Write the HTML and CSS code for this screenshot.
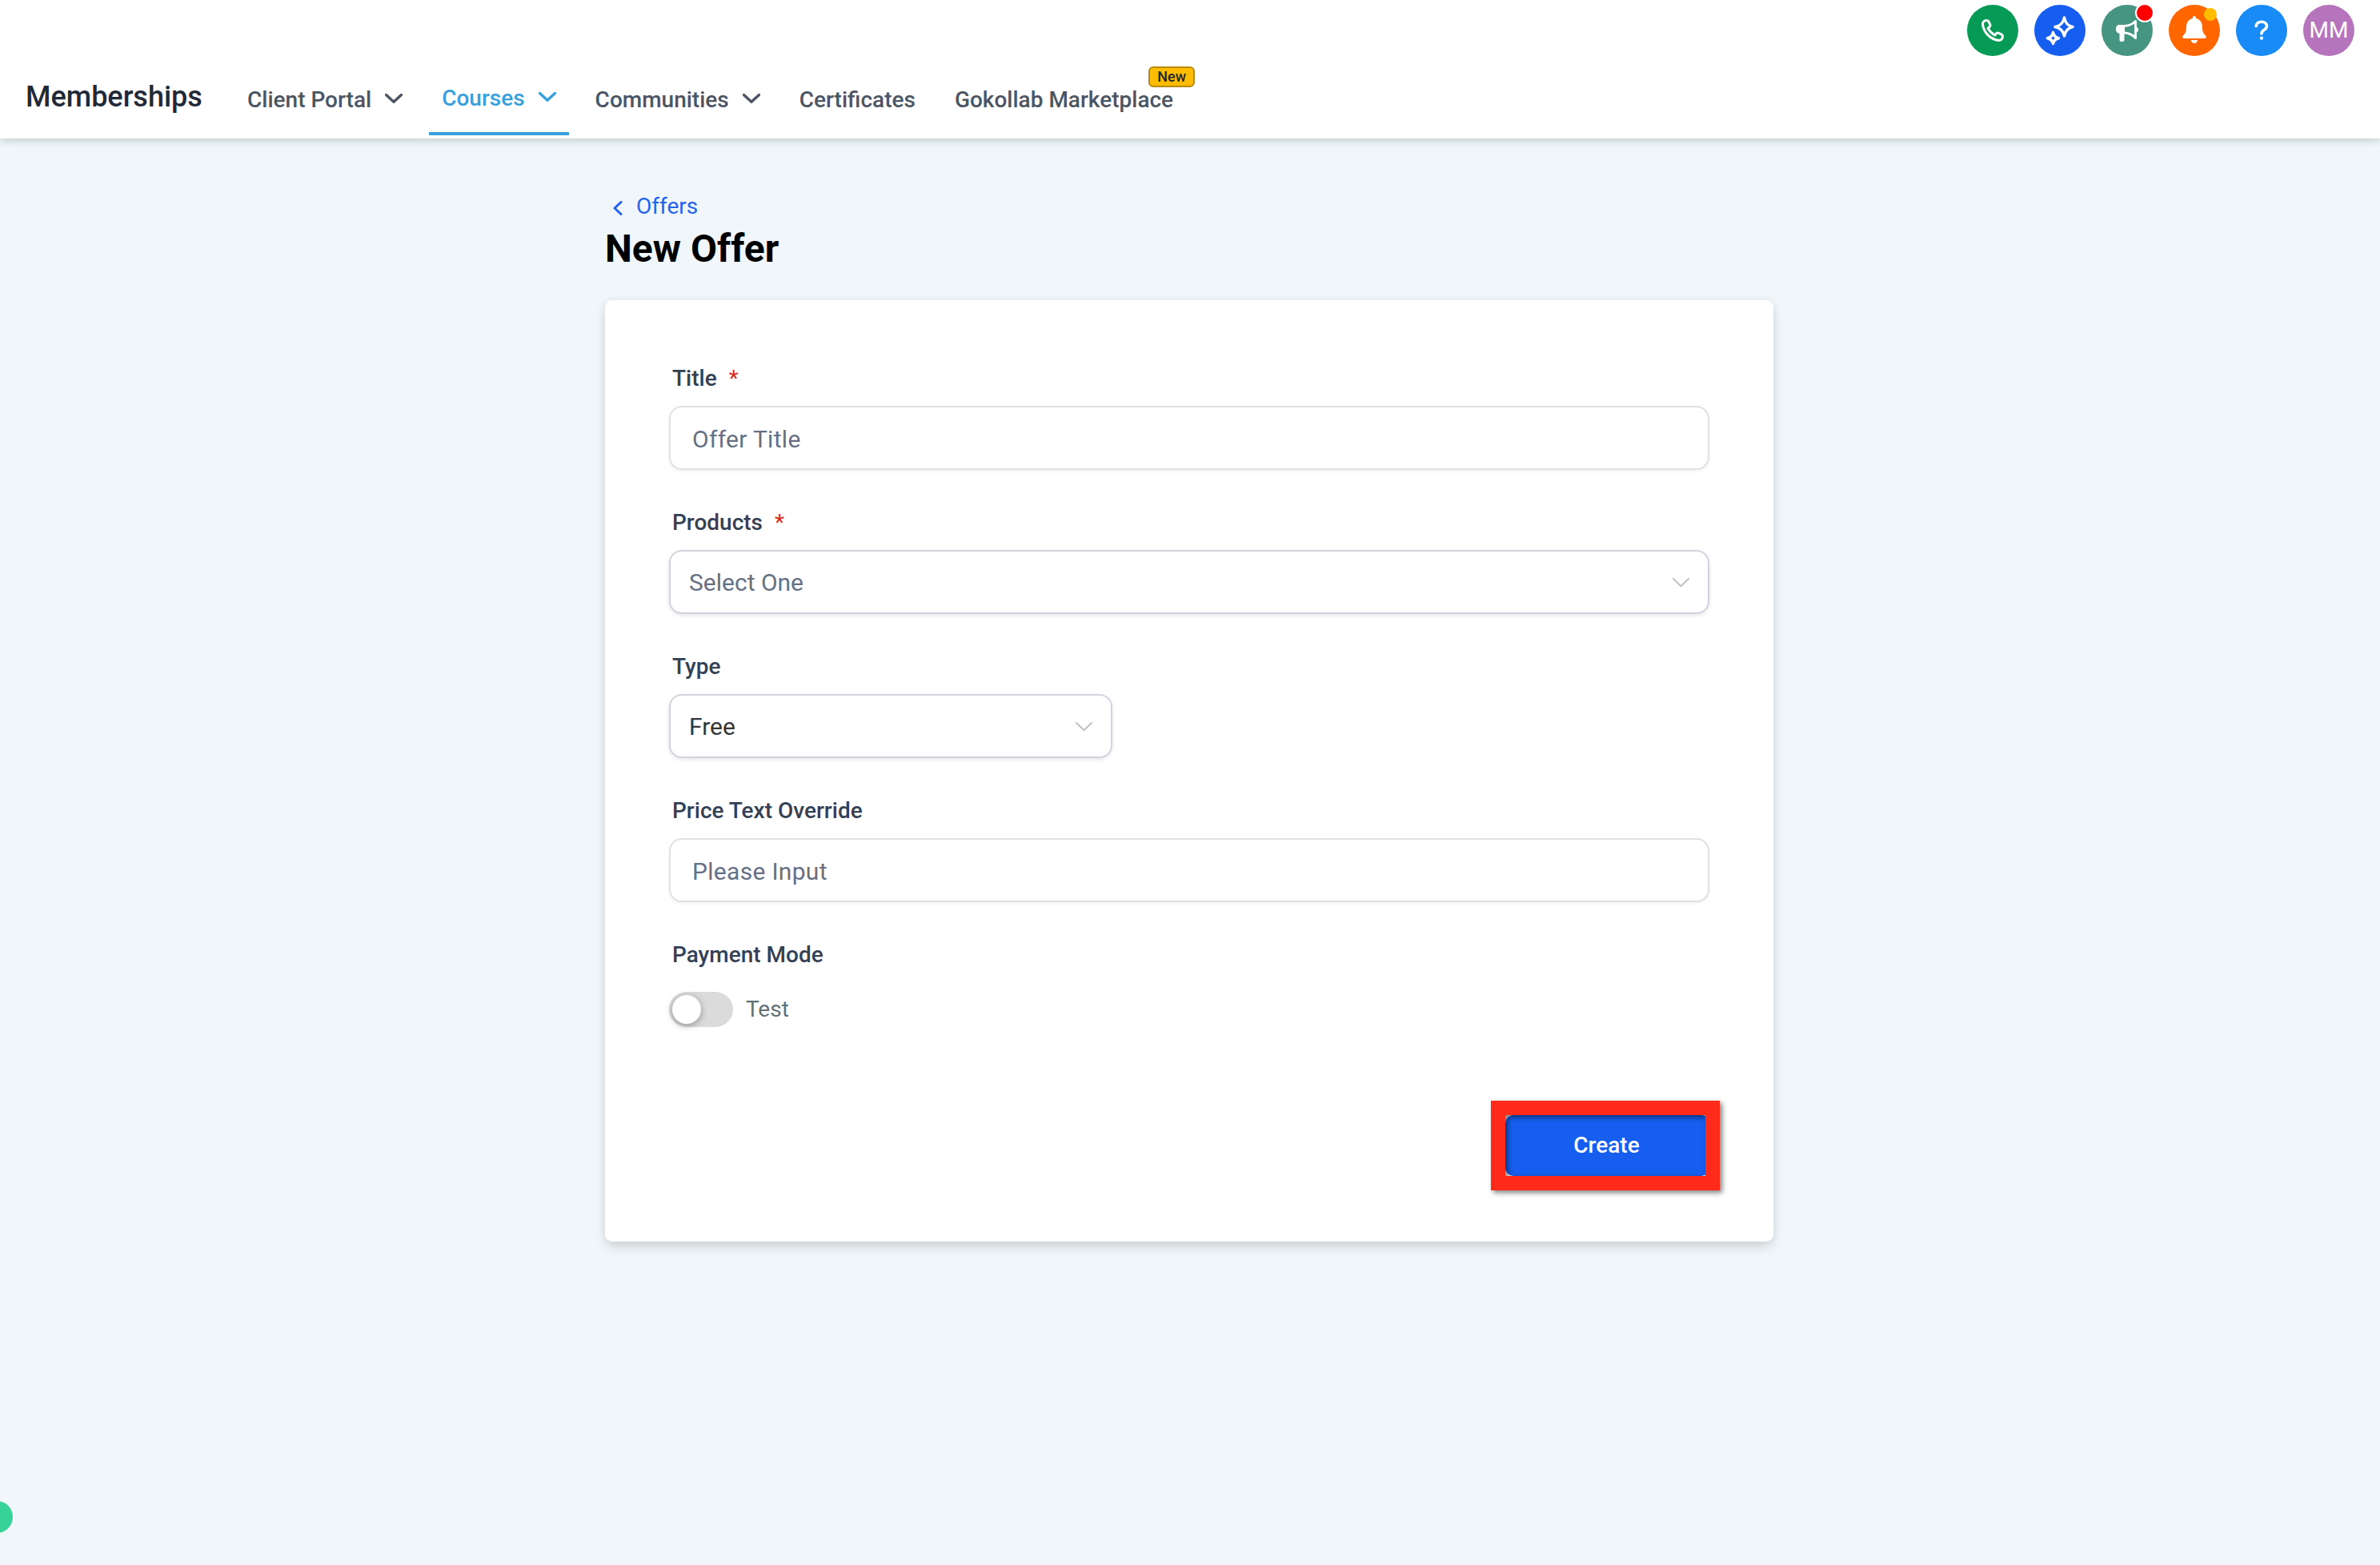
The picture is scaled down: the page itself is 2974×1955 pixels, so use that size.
FILE: index.html
```
<!DOCTYPE html>
<html lang="en">
<head>
    <meta charset="UTF-8">
    <meta name="viewport" content="width=device-width, initial-scale=1.0">
    <title>New Offer</title>
    <link rel="stylesheet" href="styles.css">
</head>
<body>
    <header class="header">
        <div class="topbar">
            <a class="circle phone">
                <svg width="28" height="28" viewBox="0 0 28 28"><path d="M6.500 1.600 C3.500 1.200 1.400 3.500 1.500 6.500 C3 17 11 25 21.500 26.500 C24.500 26.500 26.600 24.500 26.400 21.500 C26.400 20.300 25.800 19.400 24.800 18.900 L21.300 17.300 C20.100 16.800 19 17.200 18.200 18.200 L16.700 20 C13.200 18 10 14.800 8 11.300 L9.800 9.800 C10.800 9 11.200 7.900 10.700 6.700 L9.100 3.200 C8.600 2.200 7.700 1.600 6.500 1.600Z"/></svg>
            </a>
            <a class="circle spark">
                <svg width="38" height="38" viewBox="0 0 38 38"><path d="M24.500 3 Q26.500 13 35 14.500 Q26.500 16.500 24.500 26 Q22.500 16.500 13 14.500 Q22.500 13 24.500 3Z"/><path d="M10.500 21.500 Q11.500 27.500 17.500 28.700 Q11.500 30 10.500 35.500 Q9.500 30 3.300 28.700 Q9.500 27.500 10.500 21.500Z"/></svg>
            </a>
            <a class="circle horn">
                <svg width="28" height="28" viewBox="0 0 28 28"><path class="fill" d="M4 7 H11 V18 H10.500 V26 Q10.500 28 8.500 28 H6.500 Q4.500 28 4.500 26 V18 Q0 17 0 12.500 Q0 7 4 7Z"/><path d="M11 8.500 Q19 8 24.500 2.500 V23.500 Q19 17.500 11 17"/><path class="fill" d="M25 9.500 Q28 10 28 13 Q28 16 25 16.500Z"/></svg>
                <span class="dot red"></span>
            </a>
            <a class="circle bell">
                <svg width="30" height="34" viewBox="0 0 30 34"><path class="fill" d="M15 0 Q17 0 17.300 3 C23 4.500 25 9 25 14 C25 20 26.500 22 29.500 25 Q30.500 27.500 28 28 H2 Q-.5 27.500 .5 25 C3.500 22 5 20 5 14 C5 9 7 4.500 12.700 3 Q13 0 15 0Z M10.800 30 H19.200 Q18.500 34 15 34 Q11.500 34 10.800 30Z"/></svg>
                <span class="dot yellow"></span>
            </a>
            <a class="circle help">
                <svg width="18" height="26" viewBox="0 0 18 26"><path d="M2.200 7.500 C2.500 4 5.500 2.200 9 2.200 C12.800 2.200 15.500 4.500 15.500 7.500 C15.500 10 14 11.300 12 12.500 C10 13.700 9 14.800 9 17"/><circle class="fill" cx="9" cy="22.700" r="2.100"/></svg>
            </a>
            <a class="circle avatar">MM</a>
        </div>
        <nav class="nav">
            <div class="brand">Memberships</div>
            <a class="item">Client Portal <svg class="chev" width="22" height="12" viewBox="0 0 22 12"><path d="M1.500 1.500 L11 10.300 L20.500 1.500"/></svg></a>
            <a class="item active">Courses <svg class="chev" width="22" height="12" viewBox="0 0 22 12"><path d="M1.500 1.500 L11 10.300 L20.500 1.500"/></svg></a>
            <a class="item">Communities <svg class="chev" width="22" height="12" viewBox="0 0 22 12"><path d="M1.500 1.500 L11 10.300 L20.500 1.500"/></svg></a>
            <a class="item">Certificates</a>
            <a class="item">Gokollab Marketplace<span class="badge">New</span></a>
        </nav>
    </header>

    <main class="page">
        <a class="back">
            <svg width="12" height="18" viewBox="0 0 12 18"><path d="M10 1.500 L2 9 L10 16.500"/></svg>
            Offers
        </a>
        <h1>New Offer</h1>
        <form class="card">
            <div class="field">
                <label>Title <span class="star">*</span></label>
                <input type="text" placeholder="Offer Title" class="oinput">
            </div>
            <div class="field">
                <label>Products <span class="star">*</span></label>
                <div class="select">
                    <span class="empty">Select One</span>
                    <svg width="21" height="12" viewBox="0 0 21 12"><path d="M1 1 L10.500 10.300 L20 1"/></svg>
                </div>
            </div>
            <div class="field">
                <label>Type</label>
                <div class="select short">
                    <span>Free</span>
                    <svg width="21" height="12" viewBox="0 0 21 12"><path d="M1 1 L10.500 10.300 L20 1"/></svg>
                </div>
            </div>
            <div class="field">
                <label>Price Text Override</label>
                <input type="text" placeholder="Please Input" class="oinput">
            </div>
            <div class="field mode">
                <label>Payment Mode</label>
                <div class="toggle">
                    <span class="switch"><span class="thumb"></span></span>
                    <span>Test</span>
                </div>
            </div>
            <div class="actions">
                <button type="button" class="create">Create</button>
                <span class="mark"></span>
            </div>
        </form>
    </main>
    <span class="widget"></span>
</body>
</html>
```
FILE: styles.css
```
*{margin: 0;padding: 0;box-sizing: border-box;}
html,body{height: 100%;}
body{background-color: #f0f6f9;font-family: Roboto, "Liberation Sans", sans-serif;font-size: 28px;line-height: 32px;overflow: hidden;}
svg{display: block;fill: none;stroke: currentColor;stroke-linecap: round;stroke-linejoin: round;}
svg .fill{fill: currentColor;stroke: none;}

/* header */
.header{height: 173px;background-color: #fff;box-shadow: 0 2px 10px rgba(30,50,50,.24);}
.topbar{display: flex;justify-content: flex-end;gap: 20px;height: 104px;padding: 6px 32px 0 0;}
.circle{position: relative;display: flex;align-items: center;justify-content: center;width: 64px;height: 64px;border-radius: 50%;color: #fff;}
.circle svg{stroke-width: 3;}
.phone{background-color: #059a55;}
.spark{background-color: #155eef;}
.spark svg{stroke-width: 3.5;}
.horn{background-color: #459580;}
.bell{background-color: #ff6600;}
.bell svg{margin-bottom: 2px;}
.help{background-color: #188bf6;}
.help svg{stroke-width: 3.6;}
.avatar{background-color: #b674bd;}
.dot{position: absolute;border-radius: 50%;}
.red{top: -2px;right: -2px;width: 24px;height: 24px;background-color: #f00;border: 2px solid #fff;}
.yellow{top: 4px;right: 4px;width: 16px;height: 16px;background-color: #ffbc00;}

.nav{display: flex;gap: 17px;height: 65px;padding-left: 32px;}
.brand{width: 244px;padding-top: 1px;font-size: 36px;font-weight: 500;color: #1f2937;}
.item{position: relative;display: flex;gap: 17px;padding: 5px 16px 0;font-weight: 500;color: #4b5563;white-space: nowrap;}
.chev{margin-top: 8px;stroke-width: 3.4;}
.active{padding-top: 3px;color: #38a0db;border-bottom: 4px solid #38a0db;}
.badge{position: absolute;top: -21px;right: -11px;height: 26px;padding: 0 9px;border: 2px solid #b88a0b;border-radius: 6px;background-color: #ffbc00;font-size: 18px;line-height: 22px;color: #1f2937;}

/* page */
.page{width: 1460px;margin: 69px auto 0;position: relative;left: -1px;}
.back{display: flex;gap: 17px;padding-left: 10px;color: #2563eb;}
.back svg{margin-top: 9px;stroke-width: 3;}
h1{margin-top: 9px;font-size: 48px;line-height: 56px;font-weight: 700;}
.card{height: 1176px;margin-top: 36px;padding: 82px 80px 0;border-radius: 9px;background-color: #fff;box-shadow: 0 8px 16px -2px rgba(0,0,0,.14), 0 0 12px rgba(0,0,0,.06);}

.field{margin-bottom: 50px;}
label{display: block;margin-bottom: 18px;padding-left: 4px;font-weight: 500;color: #344054;}
.star{margin-left: 8px;color: #d92d20;font-weight: 400;}
.oinput,.select{width: 100%;height: 80px;border: 2px solid #e0e0e6;border-radius: 16px;background-color: #fff;box-shadow: 0 2px 4px rgba(16,24,40,.05);font-family: inherit;font-size: 30px;}
.oinput{padding: 2px 27px 0;display: block;letter-spacing: .3px;}
.oinput::placeholder{color: #667085;}
.select{display: flex;align-items: center;justify-content: space-between;padding: 0 23px;border-color: #d0d5dd;box-shadow: 0 2px 5px rgba(16,24,40,.1);color: #333639;}
.select span{padding-top: 1px;}
.select svg{margin-top: 1px;color: #c2c2c2;stroke-width: 2;}
.short{width: 554px;}
.select .empty{color: #667085;}
.mode label{margin-bottom: 30px;}
.toggle{display: flex;align-items: center;gap: 16px;height: 44px;color: #607179;}
.switch{width: 80px;height: 44px;padding: 4px;border-radius: 22px;background-color: #dbdbdb;}
.thumb{display: block;width: 36px;height: 36px;border-radius: 50%;background-color: #fff;box-shadow: 0 2px 8px rgba(0,0,0,.35);}

.actions{position: relative;display: flex;justify-content: flex-end;margin-top: 110px;}
.create{width: 255px;height: 76px;padding: 0 2px 2px 0;border: none;border-radius: 10px;background-color: #155eef;color: #fff;font: 500 28px Roboto, sans-serif;}
/* red frame around the button */
.mark{position: absolute;top: -18px;right: -13px;width: 286px;height: 112px;border: 18px solid #ff2a1a;filter: drop-shadow(3px 3px 3px rgba(0,0,0,.5));}
.widget{position: absolute;left: -24px;top: 1875px;width: 40px;height: 40px;border-radius: 50%;background-color: #37d399;}
```
